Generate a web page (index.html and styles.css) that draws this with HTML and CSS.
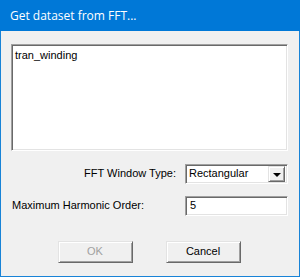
FILE: index.html
```html
<!DOCTYPE html>
<html lang="en">
<head>
    <meta charset="UTF-8">
    <title>Get dataset from FFT...</title>
    <link rel="stylesheet" href="styles.css">
</head>
<body>
    <div class="dlg">
        <div class="dlg-title">Get dataset from FFT...</div>
        <div class="dlg-body">
            <div class="listbox">tran_winding</div>

            <div class="row row-right">
                <span class="lbl">FFT Window Type:</span>
                <div class="combo">
                    <span class="combo-text">Rectangular</span>
                    <span class="combo-btn"><em class="arrow"></em></span>
                </div>
            </div>

            <div class="row">
                <span class="lbl lbl-grow">Maximum Harmonic Order:</span>
                <div class="edit">5</div>
            </div>

            <div class="btns">
                <div class="btn btn-off">OK</div>
                <div class="btn">Cancel</div>
            </div>
        </div>
    </div>
</body>
</html>
```

FILE: styles.css
```css
body,div,p{margin:0;padding:0;}
body{font:11px/1.2 "Liberation Sans",Arial,sans-serif;color:#000;background:#f0f0f0;}
.dlg{width:300px;height:277px;box-sizing:border-box;border:1px solid #1883d7;border-top:0;background:#f0f0f0;}
.dlg-title{height:31px;margin:0 -1px;padding-left:10px;background:#0078d7;color:#fff;font:12px/31px "Open Sans","Noto Sans",sans-serif;}
.dlg-body{padding:13px 11px 0 10px;}

/* sunken boxes */
.listbox,.combo,.edit{box-sizing:border-box;background:#fff;border:1px solid;border-color:#a0a0a0 #fff #fff #a0a0a0;box-shadow:inset 1px 1px #696969,inset -1px -1px #e3e3e3;}
.listbox{height:107px;padding:4px 0 0 3px;}

.row{display:flex;align-items:center;margin-top:13px;}
.row + .row{margin-top:12px;}
.row-right{justify-content:flex-end;}
.lbl{padding-right:9px;}
.lbl-grow{flex:1;padding-left:1px;}

.combo{width:103px;height:20px;display:flex;align-items:center;padding:0 2px 0 3px;}
.combo-text{flex:1;}
.combo-btn{width:17px;height:16px;box-sizing:border-box;background:#f0f0f0;border:1px solid;border-color:#e3e3e3 #696969 #696969 #e3e3e3;box-shadow:inset 1px 1px #fff,inset -1px -1px #a0a0a0;display:flex;align-items:center;justify-content:center;}
.arrow{display:block;width:0;height:0;border-left:4px solid transparent;border-right:4px solid transparent;border-top:4px solid #000;margin-top:1px;}

.edit{width:103px;height:20px;display:flex;align-items:center;padding-left:4px;}

.btns{display:flex;justify-content:center;gap:33px;margin-top:25px;padding-right:1px;}
.btn{width:75px;height:22px;box-sizing:border-box;display:flex;align-items:center;justify-content:center;background:#f0f0f0;border:1px solid;border-color:#e3e3e3 #696969 #696969 #e3e3e3;box-shadow:inset 1px 1px #fff,inset -1px -1px #a0a0a0;}
.btn-off{color:#a0a0a0;}
```
